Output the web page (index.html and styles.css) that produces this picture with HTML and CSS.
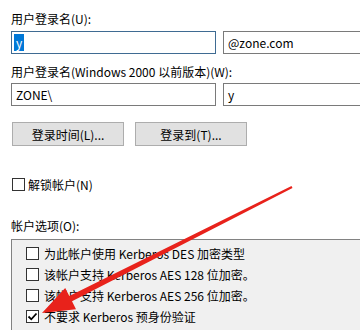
FILE: index.html
```html
<!DOCTYPE html>
<html lang="zh-CN">
<head>
    <meta charset="UTF-8">
    <title>帐户</title>
    <link rel="stylesheet" href="styles.css">
</head>
<body>
    <div class="page">
        <div class="label label-first">用户登录名(U):</div>
        <div class="field-row">
            <div class="input input-left focused"><span class="selected">y</span></div>
            <div class="input input-right">@zone.com</div>
        </div>

        <div class="label label-second">用户登录名(Windows 2000 以前版本)(W):</div>
        <div class="field-row field-row-tight">
            <div class="input input-left">ZONE\</div>
            <div class="input input-right">y</div>
        </div>

        <div class="buttons">
            <button class="btn">登录时间(L)...</button>
            <button class="btn">登录到(T)...</button>
        </div>

        <div class="check-row unlock">
            <span class="box"></span>
            <span>解锁帐户(N)</span>
        </div>

        <div class="label label-options">帐户选项(O):</div>
        <div class="listbox">
            <div class="list-item"><span class="box"></span><span>为此帐户使用 Kerberos DES 加密类型</span></div>
            <div class="list-item"><span class="box"></span><span>该帐户支持 Kerberos AES 128 位加密。</span></div>
            <div class="list-item"><span class="box"></span><span>该帐户支持 Kerberos AES 256 位加密。</span></div>
            <div class="list-item"><span class="box checked">
                <svg width="11" height="11" viewBox="0 0 11 11"><path d="M1.5 5.5 L4.3 8.3 L9.5 2.5" fill="none" stroke="#000" stroke-width="1.8"/></svg>
            </span><span>不要求 Kerberos 预身份验证</span></div>
        </div>
    </div>

    <!-- red annotation arrow drawn over the dialog -->
    <svg class="annotation" width="360" height="330" viewBox="0 0 360 330">
        <polygon fill="#e8221b" points="291.5,186.1 69.3,295.9 65.2,287.9 42,313 76,309.3 72,301.3 292.5,187.9"/>
    </svg>
</body>
</html>
```

FILE: styles.css
```css
body {
    margin: 0;
    background: #fff;
    font-family: "Microsoft YaHei", "Noto Sans CJK SC", sans-serif;
    font-size: 12px;
    color: #000;
    width: 360px;
    height: 330px;
    overflow: hidden;
    position: relative;
}
.page {
    padding: 11px 0 0 11px;
}
.label {
    line-height: 16px;
    height: 16px;
    white-space: nowrap;
}
.label-second {
    margin-top: 10px;
}
.label-options {
    margin-top: 26px;
}
.field-row {
    display: flex;
    gap: 7px;
    margin-top: 4px;
}
.field-row-tight {
    margin-top: 3px;
}
.input {
    box-sizing: border-box;
    height: 23px;
    border: 1px solid #7a7a7a;
    padding: 0 4px;
    line-height: 21px;
    white-space: nowrap;
    flex: none;
}
.input-left {
    width: 205px;
}
.input-right {
    width: 150px;
}
.focused {
    border-color: #3f6b92;
    padding-left: 2px;
}
.selected {
    display: inline-block;
    background: #0078d7;
    color: #fff;
    line-height: 17px;
    padding: 0 2px;
}
.buttons {
    display: flex;
    gap: 11px;
    margin: 16px 0 0 1px;
}
.btn {
    box-sizing: border-box;
    width: 112px;
    height: 24px;
    background: #e1e1e1;
    border: 1px solid #adadad;
    font: inherit;
    color: #000;
    padding: 0;
}
.check-row {
    display: flex;
    align-items: center;
    gap: 3px;
    height: 16px;
    margin-top: 30px;
    margin-left: 1px;
}
.box {
    box-sizing: border-box;
    width: 13px;
    height: 13px;
    border: 1px solid #333;
    background: #fff;
    flex: none;
    display: flex;
    align-items: center;
    justify-content: center;
}
.listbox {
    margin-top: 5px;
    border: 1px solid #828282;
    border-right: none;
    background: #f0f0f0;
    padding: 3px 0 0 14px;
    height: 100px;
}
.list-item {
    display: flex;
    align-items: center;
    gap: 5px;
    height: 21px;
    white-space: nowrap;
}
.annotation {
    position: absolute;
    left: 0;
    top: 0;
    pointer-events: none;
}
```
